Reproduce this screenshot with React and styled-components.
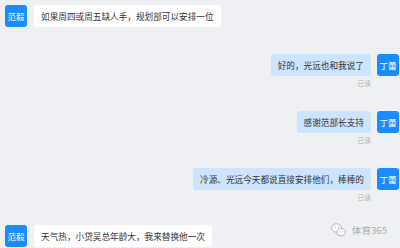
import styled, { createGlobalStyle } from "styled-components";

//Chat data
const messages = [
  { id: 1, from: "范毅", text: "如果周四或周五缺人手，规划部可以安排一位" },
  { id: 2, from: "丁蕾", mine: true, read: true, text: "好的，光远也和我说了" },
  { id: 3, from: "丁蕾", mine: true, read: true, text: "感谢范部长支持" },
  {
    id: 4,
    from: "丁蕾",
    mine: true,
    read: true,
    text: "冷源、光远今天都说直接安排他们，棒棒的",
  },
  { id: 5, from: "范毅", text: "天气热，小贷吴总年龄大，我来替换他一次" },
];

const GlobalStyle = createGlobalStyle`
  html, body {
    margin: 0;
    padding: 0;
    background: #eff0f3;
  }
  body {
    font-family: "Noto Sans CJK SC", "Noto Sans", sans-serif;
  }
`;

function WeChatIcon() {
  return (
    <svg width="15" height="14" viewBox="0 0 15 14">
      <ellipse cx="5.6" cy="5" rx="5" ry="4.2" fill="#fff" stroke="#b4b4b4" strokeWidth="1" />
      <ellipse cx="10" cy="9.2" rx="4.2" ry="3.6" fill="#fff" stroke="#b4b4b4" strokeWidth="1" />
      <circle cx="3.9" cy="4" r="0.7" fill="#b4b4b4" />
      <circle cx="7.2" cy="4" r="0.7" fill="#b4b4b4" />
      <circle cx="8.6" cy="8.6" r="0.55" fill="#b4b4b4" />
      <circle cx="11.4" cy="8.6" r="0.55" fill="#b4b4b4" />
    </svg>
  );
}

export default function App() {
  return (
    <>
      <GlobalStyle />
      <Page>
        {messages.map((msg) => (
          <Row key={msg.id} $mine={msg.mine}>
            <Avatar>{msg.from}</Avatar>
            <Body $mine={msg.mine}>
              <Bubble $mine={msg.mine}>{msg.text}</Bubble>
              {msg.read && <Read>已读</Read>}
            </Body>
          </Row>
        ))}
        <Watermark>
          <WeChatIcon />
          <span>体育365</span>
        </Watermark>
      </Page>
    </>
  );
}

const Page = styled.div`
  position: relative;
  width: 400px;
  height: 248px;
  box-sizing: border-box;
  padding: 5px 1px 0 5px;
  display: flex;
  flex-direction: column;
  gap: 27px;
  overflow: hidden;
  background: #eff0f3;
`;

const Row = styled.div`
  display: flex;
  flex-direction: ${(p) => (p.$mine ? "row-reverse" : "row")};
  align-items: flex-start;
  gap: ${(p) => (p.$mine ? "6px" : "7px")};
`;

const Avatar = styled.div`
  flex: none;
  width: 22px;
  height: 22px;
  border-radius: 3px;
  background: #1a8cfd;
  color: #fff;
  font-size: 8.5px;
  line-height: 22px;
  text-align: center;
`;

const Body = styled.div`
  display: flex;
  flex-direction: column;
  align-items: ${(p) => (p.$mine ? "flex-end" : "flex-start")};
`;

const Bubble = styled.div`
  height: 22px;
  padding: 0 7px;
  border-radius: 3px;
  background: ${(p) => (p.$mine ? "#cce4fd" : "#ffffff")};
  color: #333;
  font-size: 8.65px;
  line-height: 22px;
  white-space: nowrap;
`;

const Read = styled.div`
  margin-top: 4px;
  margin-bottom: -2px;
  height: 6px;
  line-height: 6px;
  font-size: 6.8px;
  color: #b0b0b0;
`;

const Watermark = styled.div`
  position: absolute;
  right: 13px;
  bottom: 11px;
  display: flex;
  align-items: center;
  gap: 6px;
  color: #acacac;
  font-size: 9.6px;
  line-height: 12px;
`;
